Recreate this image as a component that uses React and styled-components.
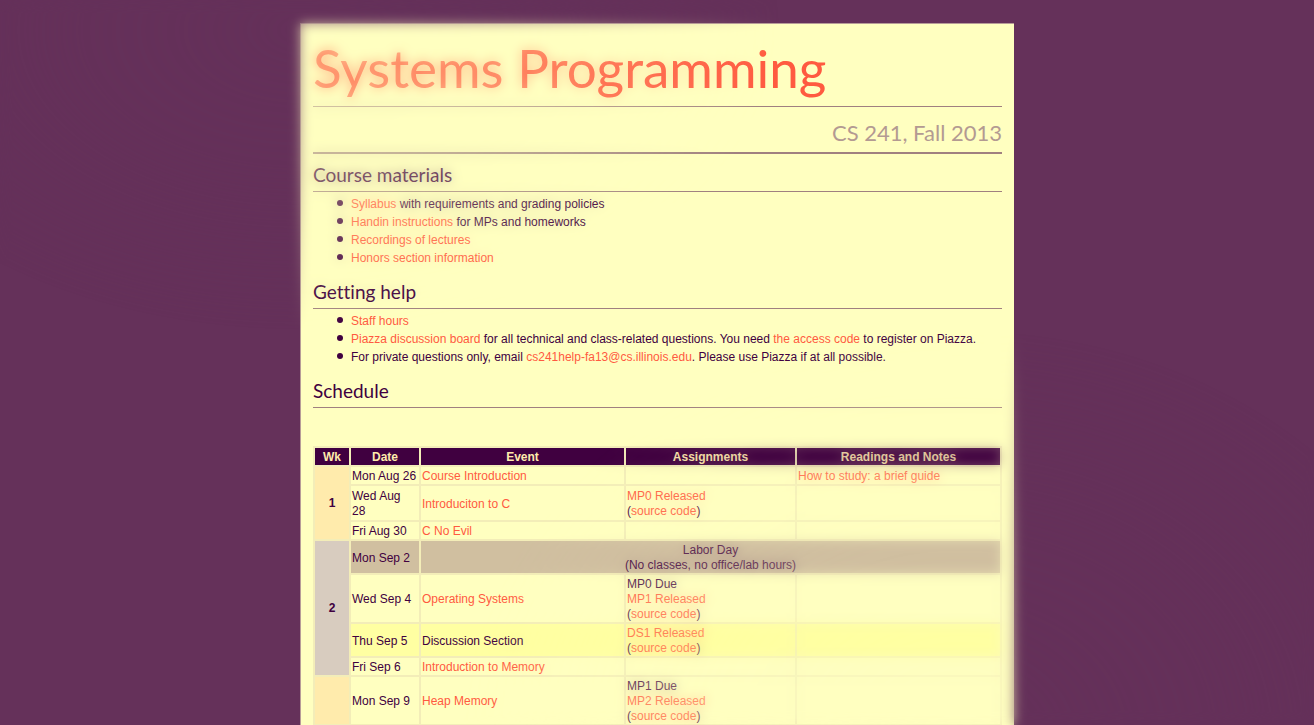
import React from "react";
import styled, { createGlobalStyle } from "styled-components";

const GlobalStyle = createGlobalStyle`
  body {
    margin: 0;
    background: #65315a;
    color: #400040;
    font-family: "Liberation Sans", Arial, sans-serif;
    font-size: 12px;
    line-height: 15px;
  }
`;

const Page = styled.div`
  display: flex;
  justify-content: center;
  padding-top: 23px;
`;

const Sheet = styled.main`
  box-sizing: border-box;
  width: 100%;
  max-width: 714px;
  padding: 12px 12px 0;
  border: solid #b79c98;
  border-width: 1px 0 0 1px;
  background: #ffffc0;
`;

const Title = styled.h1`
  margin: 0;
  padding-bottom: 6px;
  border-bottom: 1px solid #a08080;
  color: #ff5a40;
  font: 400 53px/64px Lato, sans-serif;
`;

const Subtitle = styled.p`
  margin: 0;
  padding: 12px 0 5px;
  border-bottom: 2px solid #a08080;
  color: #b39a92;
  font: 400 22px/28px Lato, sans-serif;
  text-align: right;
`;

const Heading = styled.h2`
  margin: ${(p) => (p.$first ? 9 : 13)}px 0 0;
  padding-bottom: 4px;
  border-bottom: 1px solid #a08080;
  font: 400 19px/24px Lato, sans-serif;
  font-variant-ligatures: none;
`;

const List = styled.ul`
  margin: 0;
  padding: 3px 0 0 38px;
  line-height: 18px;
  list-style: none;
`;

const Item = styled.li`
  &::before {
    content: "";
    display: inline-block;
    width: 6px;
    height: 6px;
    margin: 0 8px 0 -14px;
    border-radius: 50%;
    background: currentColor;
    vertical-align: 2px;
  }
`;

const Link = styled.a`
  color: #ff5a40;
  text-decoration: none;
`;

const Table = styled.table`
  width: 100%;
  margin-top: 38px;
  border-spacing: 2px;
  table-layout: fixed;
  background: #f3edb8;
`;

const Col = styled.col`
  width: ${(p) => p.$width};
`;

const HeadCell = styled.th`
  padding: 2px 1px 0;
  background: #400040;
  color: #ffebac;
`;

const tones = {
  plain: "#ffffc0",
  holiday: "#d0bfa0",
  section: "#ffffa2",
};

const Row = styled.tr`
  height: ${(p) => p.$height}px;
`;

const Cell = styled.td`
  padding: 2px 1px 0;
  background: ${(p) => tones[p.$tone || "plain"]};
  text-align: ${(p) => (p.$center ? "center" : "left")};
`;

const WeekCell = styled.th`
  padding: 1px;
  background: ${(p) => (p.$even ? "#d8ccbf" : "#ffebac")};
`;

/* Soft glow that blends a blurred copy of the page over its corners. */
const Glow = styled.div`
  position: fixed;
  inset: 0;
  pointer-events: none;
  backdrop-filter: blur(6px);
  mask-image: radial-gradient(
      480px 300px at 300px 30px,
      rgba(0, 0, 0, 0.66),
      rgba(0, 0, 0, 0.46) 45%,
      transparent
    ),
    radial-gradient(
      500px 410px at 960px 740px,
      rgba(0, 0, 0, 0.74),
      rgba(0, 0, 0, 0.46) 50%,
      transparent
    );
`;

const weeks = [
  {
    week: 1,
    rows: [
      {
        date: "Mon Aug 26",
        event: "Course Introduction",
        notes: "How to study: a brief guide",
      },
      {
        date: (
          <>
            Wed Aug
            <br />
            28
          </>
        ),
        event: "Introduciton to C",
        released: "MP0 Released",
        height: 34,
      },
      { date: "Fri Aug 30", event: "C No Evil" },
    ],
  },
  {
    week: 2,
    rows: [
      {
        date: "Mon Sep 2",
        holiday: "Labor Day",
        detail: "(No classes, no office/lab hours)",
      },
      {
        date: "Wed Sep 4",
        event: "Operating Systems",
        due: "MP0 Due",
        released: "MP1 Released",
      },
      {
        date: "Thu Sep 5",
        event: "Discussion Section",
        released: "DS1 Released",
        tone: "section",
      },
      { date: "Fri Sep 6", event: "Introduction to Memory" },
    ],
  },
  {
    week: "",
    rows: [
      {
        date: "Mon Sep 9",
        event: "Heap Memory",
        due: "MP1 Due",
        released: "MP2 Released",
      },
    ],
  },
];

function Assignment({ due, released }) {
  return (
    <>
      {due && <div>{due}</div>}
      {released && (
        <>
          <div>
            <Link href="#assignment">{released}</Link>
          </div>
          <div>
            (<Link href="#source">source code</Link>)
          </div>
        </>
      )}
    </>
  );
}

function ScheduleRow({ row, weekCell }) {
  if (row.holiday) {
    return (
      <Row $height={32}>
        {weekCell}
        <Cell $tone="holiday">{row.date}</Cell>
        <Cell $tone="holiday" $center colSpan={3}>
          {row.holiday}
          <br />
          {row.detail}
        </Cell>
      </Row>
    );
  }
  return (
    <Row $height={row.height || 17}>
      {weekCell}
      <Cell $tone={row.tone}>{row.date}</Cell>
      <Cell $tone={row.tone}>
        {row.tone === "section" ? row.event : <Link href="#lecture">{row.event}</Link>}
      </Cell>
      <Cell $tone={row.tone}>
        <Assignment due={row.due} released={row.released} />
      </Cell>
      <Cell $tone={row.tone}>{row.notes && <Link href="#notes">{row.notes}</Link>}</Cell>
    </Row>
  );
}

export default function App() {
  return (
    <>
      <GlobalStyle />
      <Page>
        <Sheet>
          <Title>Systems Programming</Title>
          <Subtitle>CS 241, Fall 2013</Subtitle>

          <Heading $first>Course materials</Heading>
          <List>
            <Item>
              <Link href="#syllabus">Syllabus</Link> with requirements and grading policies
            </Item>
            <Item>
              <Link href="#handin">Handin instructions</Link> for MPs and homeworks
            </Item>
            <Item>
              <Link href="#recordings">Recordings of lectures</Link>
            </Item>
            <Item>
              <Link href="#honors">Honors section information</Link>
            </Item>
          </List>

          <Heading>Getting help</Heading>
          <List>
            <Item>
              <Link href="#hours">Staff hours</Link>
            </Item>
            <Item>
              <Link href="#piazza">Piazza discussion board</Link> for all technical and
              class-related questions. You need <Link href="#code">the access code</Link> to
              register on Piazza.
            </Item>
            <Item>
              For private questions only, email{" "}
              <Link href="mailto:cs241help-fa13@cs.illinois.edu">
                cs241help-fa13@cs.illinois.edu
              </Link>
              . Please use Piazza if at all possible.
            </Item>
          </List>

          <Heading>Schedule</Heading>
          <Table>
            <colgroup>
              <Col $width="34px" />
              <Col $width="68px" />
              <Col $width="auto" />
              <Col $width="169px" />
              <Col $width="auto" />
            </colgroup>
            <thead>
              <tr>
                <HeadCell scope="col">Wk</HeadCell>
                <HeadCell scope="col">Date</HeadCell>
                <HeadCell scope="col">Event</HeadCell>
                <HeadCell scope="col">Assignments</HeadCell>
                <HeadCell scope="col">Readings and Notes</HeadCell>
              </tr>
            </thead>
            <tbody>
              {weeks.map(({ week, rows }, w) =>
                rows.map((row, i) => (
                  <ScheduleRow
                    key={`${w}-${i}`}
                    row={row}
                    weekCell={
                      i === 0 && (
                        <WeekCell scope="rowgroup" rowSpan={rows.length} $even={w % 2 === 1}>
                          {week}
                        </WeekCell>
                      )
                    }
                  />
                ))
              )}
            </tbody>
          </Table>
        </Sheet>
      </Page>
      <Glow />
    </>
  );
}
